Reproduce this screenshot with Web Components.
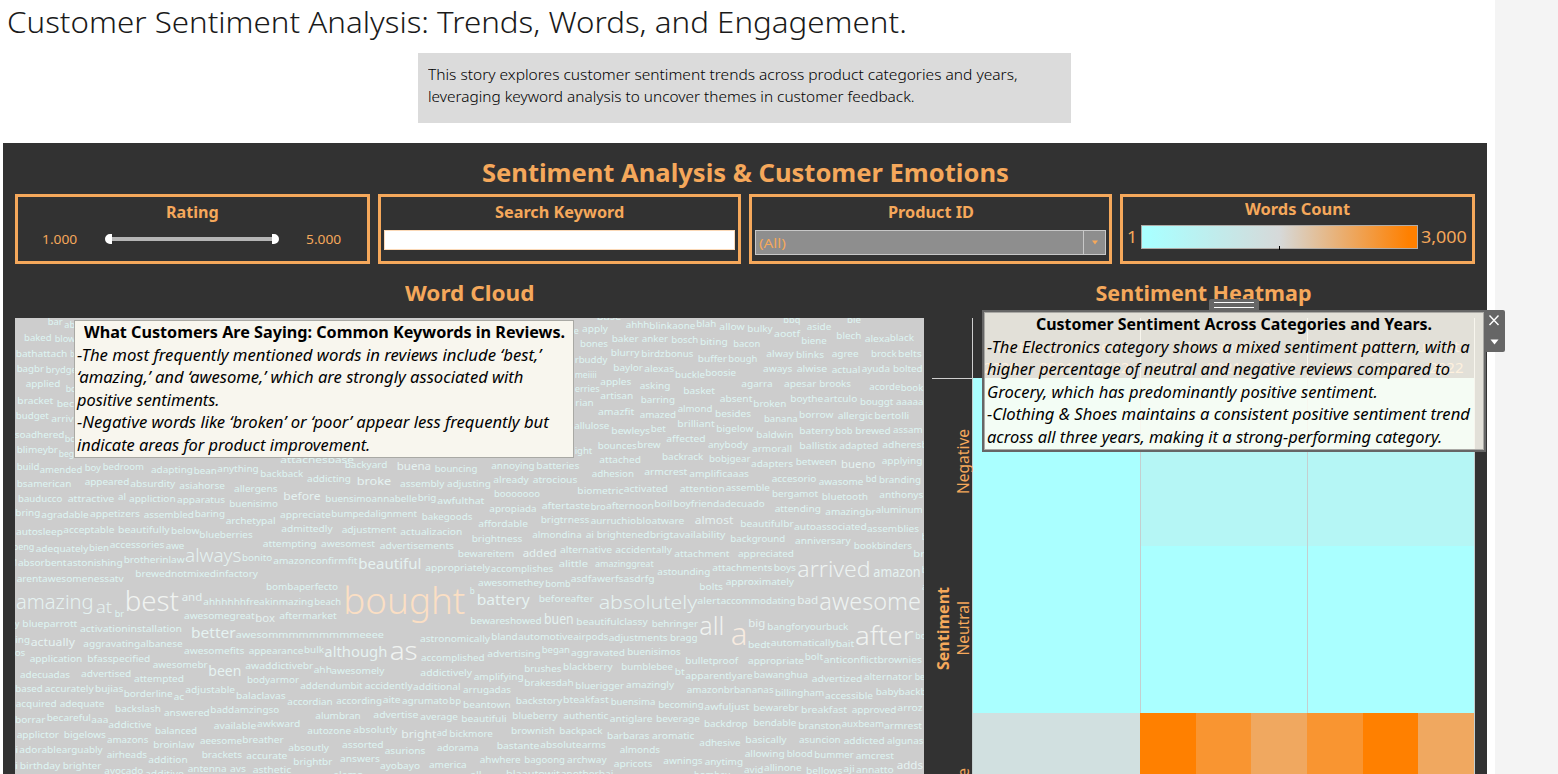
<!DOCTYPE html>
<html lang="en">
<head>
<meta charset="utf-8">
<title>Customer Sentiment Analysis</title>
<style>
html, body { margin: 0; height: 100%; overflow: hidden; background: #fff; }
body { font-family: "Noto Sans", "Open Sans", sans-serif; color: #333; }
</style>
</head>
<body>
<story-page></story-page>
<script>
const define = (name, html, setup) => customElements.define(name, class extends HTMLElement {
  connectedCallback() {
    if (this.shadowRoot) return;
    const t = document.createElement('template');
    t.innerHTML = html;
    this.attachShadow({ mode: 'open' }).append(t.content.cloneNode(true));
    if (setup) setup(this, this.shadowRoot);
  }
});

/* One line of text set to a fixed measure */
define('fit-text', `<style>
:host { display: block; white-space: nowrap; flex: none; }
span { display: inline-block; transform-origin: 0 50%; }
</style><span><slot></slot></span>`, (el, root) => {
  const w = +el.getAttribute('w');
  el.style.width = w + 'px';
  const s = root.querySelector('span');
  s.style.transform = `scaleX(${w / s.offsetWidth})`;
});

define('filter-card', `<style>
:host { display: block; box-sizing: border-box; height: 70px; border: 3px solid #f5a85b; color: #f5a85b; overflow: hidden; }
.t { display: flex; justify-content: center; font-weight: 700; font-size: 15.5px; line-height: 20px; padding-top: var(--top, 5px); }
</style><div class="t"><slot name="title"></slot></div><slot></slot>`);

define('range-slider', `<style>
:host { display: flex; align-items: center; font-size: 13px; height: 20px; padding: 7px 26px 0 24px; justify-content: space-between; }
svg { display: block; }
</style><fit-text w="35">1.000</fit-text>
<svg width="176" height="14"><path d="M5 7H170" stroke="#b5b5b5" stroke-width="4"/><path d="M8 2v10H6a5 5 0 0 1 0-10zM168 2v10h2a5 5 0 0 0 0-10z" fill="#fff"/></svg>
<fit-text w="35">5.000</fit-text>`);

define('search-box', `<style>:host { display: block; height: 18px; border: 1px solid #fbd9b8; background: #fff; margin: 8px 3px 0; }</style>`);

define('select-box', `<style>
:host { display: flex; height: 23px; border: 1px solid #c8c8c8; background: #8e8e8e; margin: 8px 3px 0; font-size: 13px; line-height: 25px; }
.v { flex: 1; padding-left: 3px; }
.a { width: 21px; border-left: 1px solid #c8c8c8; display: grid; place-items: center; }
</style><div class="v"><fit-text w="27">(All)</fit-text></div><div class="a"><svg width="8" height="5"><path d="M1 .5h6L4 4.5z" fill="#f5a85b"/></svg></div>`);

define('color-legend', `<style>
:host { display: flex; align-items: center; font-size: 16px; margin: 4px 4px 0; height: 27px; }
.bar { position: relative; width: 275px; height: 22px; border: 1px solid #b0aca8; margin: 0 3px 0 4px; background: linear-gradient(90deg, #aaffff, #aaffff 3%, #d6d9d9 50%, #ff8000 97%); }
.bar i { position: absolute; left: 137px; top: 20px; width: 1px; height: 4px; background: #000; }
</style><fit-text w="10">1</fit-text><div class="bar"><i></i></div><fit-text w="46">3,000</fit-text>`);

/* Word placement: "word left right middle [size]", in thirds of a pixel from each tile's origin */
const tiles = [
  { x: 10, y: 315, words: `bar 113 158 20|ab 163 195 29|baked 42 125 69|blow 134 196 72|bathattach 17 172 116|b 181 193 117|bagbr 20 102 161|brydge 107 200 163|applied 47 151 206|bc 167 196 221|bracket 22 130 257|bec 140 192 265|budget 17 116 303|arriv 124 190 311|soadhered 14 163 359|bc 164 194 371|blimeybr 20 144 404|beg 146 192 415|build 20 88 456|amended 89 217 465|boy 224 273 458|bedroom 278 402 456|adapting 423 549 464|bean 551 620 467|anything 622 746 462|backback 751 880 476|bsamerican 20 184 506|appeared 224 358 500|absurdity 361 496 507|asiahorse 508 645 513|allergens 672 803 521|bauducco 24 157 551|attractive 173 313 551|al 324 348 545|appliction 357 497 551|apparatus 501 645 554|buenisimo 658 804 566|before 820 932 543 11.5|bring 16 91 594|agradable 94 236 600|appetizers 240 390 597|assembled 401 552 599|baring 554 645 597|archetypal 647 797 617|appreciate 810 962 599|autosleep 18 159 651|acceptable 160 313 644|beautifully 324 479 645|below 483 568 648|blueberries 568 728 659|admittedly 814 968 641|attachesbase 811 1032 433` },
  { x: 300, y: 450, words: `backyard 134 262 44|buena 290 393 48 11.5|bouncing 404 532 56|annoying 574 704 47|batteries 709 838 47|addicting 21 153 87|broke 170 274 94 11.5|assembly 300 433 101|adjusting 441 573 101|already 580 686 90|atrocious 698 832 90|booooooo 582 720 132|buensimoannabelle 76 351 146|brig 353 409 144|awfulthat 412 553 152|apropiada 568 710 176|aftertaste 725 870 168|bro 872 917 170|bumpedalignment 94 351 192|bakegoods 365 517 201|affordable 535 684 221|brigtrness 722 868 210|adjustment 125 289 240|actualizacion 301 487 245|brightness 515 667 266|almondina 697 845 254|ai 857 882 254|attempting -112 50 282|awesomest 63 225 282|advertisements 239 462 287|bewareitem 473 643 311|added 668 770 309 11.5|alternative 780 936 299|amazonconfirmfit -80 172 332|beautiful 175 364 342 15|appropriately 376 570 354|accomplishes 572 760 356|alittle 776 864 342|awesomethey 534 732 399|bomb 736 812 402|b 509 524 423|battery 530 689 451 14|beforeafter 716 881 447|absolutely 896 1192 456 19|bought 130 496 454 36 #fbdfc4` },
  { x: 570, y: 315, words: `base 80 154 6|e 11 26 47|apply 36 114 42|ahhh 167 238 29|blink 238 306 31|aone 307 376 32|blah 379 439 27|allow 448 524 36|bulky 532 608 42|bbq 640 691 15|aootf 612 690 57|aside 710 784 36|biene 694 770 76|ble 831 873 15|blech 799 874 62|alexa 884 960 71|black 959 1032 69|bones 30 114 86|baker 125 206 71|anker 215 294 71|bosch 304 385 74|biting 390 473 81|bacon 490 571 86|rbuddy 14 112 135|blurry 122 208 113|birdz 214 284 116|bonus 285 370 117|buffer 383 471 131|bough 475 562 131|alway 589 671 117|blinks 678 762 119|agree 785 866 117|brock 903 980 117|belts 984 1055 117|meiiii 14 80 180|baylor 130 219 159|alexas 223 312 162|buckle 315 405 179|boosie 406 498 173|aways 579 667 162|alwise 680 772 162|actual 785 871 164|ayuda 875 960 162|bolted 969 1058 162|erries 14 89 221|apples 91 184 200|asking 209 301 213|basket 340 435 227|agarra 514 608 207|apesar 642 739 207|brooks 748 843 207|acorde 898 991 216|book 992 1060 219|rian 16 71 263|artisan 91 190 242|barring 212 315 255|almond 323 427 282|absent 449 547 251|broken 550 649 267|boythe 661 760 251|artculo 762 862 251|bouggt 870 970 261|aaaaa 978 1061 261|amazfit 84 193 290|amazed 209 318 300|besides 435 543 296|banana 582 683 311|borrow 687 790 300|allergic 803 908 302|bertolli 913 1018 302|allulose 13 118 332|bewleys 124 240 348|bet 242 287 342|brilliant 322 434 326|bigelow 439 550 341|baldwin 559 670 359|baterry 688 793 347|bob 796 848 347|brewed 856 962 347|assam 969 1058 345|ight 14 67 407|bounces 83 200 392|brew 202 272 390|affected 289 407 371|anybody 414 533 388|armorall 546 666 401|ballistix 688 801 392|adapted 808 925 393|adheres 937 1054 389|b 1055 1070 389|attached 88 213 434|backrack 276 400 426|bobjgear 417 542 432|adapters 543 669 446|between 677 800 440|bueno 813 916 447 11.5|applying 935 1057 438|adhesion 65 192 476|armcrest 223 352 471|amplificaaas 358 537 477` },
  { x: 610, y: 450, words: `accesorio 485 619 86|awasome 626 760 95|bd 767 800 86|branding 807 933 88|biometric -98 40 122|activated 41 174 116|attention 209 344 117|assemble 347 480 114|bergamot 486 624 132|bluetooth 635 774 140|anthonys 808 940 134|afternoon -12 131 167|boil 133 187 161|boyfriend 190 328 161|adecuado 328 464 161|attending 494 633 177|amazingbr 646 797 185|aluminum 797 938 179|aurruchio -58 78 212|bloatware 79 223 212|almost 254 370 210 11.5|beautifulbr 391 551 221|autoassociated 552 770 230|assemblies 771 927 236|b 935 950 260|brightened -40 118 254|brigtavailability 119 346 254|background 361 526 266|anniversary 555 722 273|bookbinders 731 906 287|br 910 945 311|accidentally 16 186 299|attachment 193 358 311|appreciated 384 552 311|amazinggreat -45 131 342|astounding 142 301 365|attachments 307 487 353|boys 491 558 353|arrived 562 782 359 22 #edf3f2|amazon 790 932 366 14|b 935 950 360|asdfawerfsasdrfg -118 134 387|bolts 268 339 411|approximately 347 552 396|a 936 950 410|alert 262 331 452|accommodating 332 557 452|bad 562 625 450 11.5|awesome 628 933 454 24 #edf3f2` },
  { x: 10, y: 540, words: `beng 8 73 21|adequately 77 235 25|bien 237 297 23|accessories 299 463 15|awe 467 523 16|1 12 23 68|absorbent 24 169 68|astonishing 171 338 68|brotherinlaw 341 524 59|always 525 694 46 18|bonito 696 787 53|arent 20 96 115|awesomenessatv 96 341 117|brewednotmixedinfactory 376 744 101|bombaperfecto 768 984 140|amazing 18 251 186 20|at 258 306 201 17|br 314 342 221|best 344 507 185 27 #f0f3f1|and 515 577 172 11.5|ahhhhhhfreakinmazing 580 910 184|beach 913 993 184|y 14 28 252|blueparrott 37 202 251|activationinstallation 210 516 267|awesomegreat 522 734 228|box 736 795 235 11.5|aftermarket 808 980 228|ing 16 60 298|actually 62 195 306 11.5|aggravatingalbanese 220 518 312|better 543 677 278 14.5|awesommmmmmmmmeeee 677 1122 284|awesomefits 522 703 331|appearance 716 880 333|bulk 882 942 330|os 14 46 339` },
  { x: 10, y: 650, words: `application 59 217 26|bfasspecified 232 421 26|awesomebr 428 593 45|been 595 694 64 14.5|awaddictivebr 706 910 48|ahh 911 966 60|adecuadas 30 180 74|advertised 213 364 71|attempted 372 522 87|bodyarmor 711 867 89|based 16 98 117|accurately 104 251 117|bujias 255 340 117|borderline 341 488 131|ac 491 522 141|adjustable 526 675 119|balaclavas 678 827 137|addendumbit 871 1058 108|acquired 17 140 161|adequate 149 283 162|backslash 315 453 177|answered 462 599 188|baddamzingso 601 808 180|accordian 832 968 154|borrar 15 106 210|becareful 110 243 204|aaa 244 295 209|addictive 295 425 224|balanced 435 561 242|available 611 739 227|awkward 741 871 221|alumbran 916 1052 197|applictor 20 147 255|bigelows 161 288 255|amazons 291 415 269|broinlaw 430 553 285|aeesome 570 696 271|breather 697 821 269|autozone 892 1023 243|i 16 25 300|adorable 28 155 300|arguably 155 278 300|airheads 290 411 315|addition 415 533 330|brackets 575 696 315|accurate 709 832 317|absoutly 835 957 293|i 15 24 348|birthday 29 151 347|brighter 158 274 347|avocado 283 400 362|additive 405 522 372|antenna 533 650 357|avs 660 708 357|asthetic 728 844 360|brightbr 850 967 335` },
  { x: 310, y: 610, words: `although 43 232 126 15|as 239 323 124 26 #f0f3f1|bewareshowed 481 695 32|buen 702 791 26 14|beautifulclassy 799 1013 36|astronomically 330 540 86|bland 544 623 79|automotive 624 789 79|airpods 790 895 81|adjustments 896 1073 82|accomplished 333 524 144|advertising 532 692 131|began 695 780 120|aggravated 783 945 127|awesomely 64 223 183|addictively 331 486 189|amplifying 491 641 199|brushes 643 754 176|blackberry 759 908 171|accidently 164 308 228|additional 309 452 230|arrugadas 459 603 240|brakesdah 643 791 218|bluerigger 796 942 226|according 79 216 272|aite 218 272 270|agrumato 276 415 273|bp 418 453 273|beantown 459 602 284|backstory 617 757 272|bteakfast 759 896 269|buensima 902 1036 276|advertise 190 325 315|average 331 444 321|beautifuli 454 590 326|blueberry 607 743 318|authentic 760 895 316|antiglare 899 1028 326|absolutly 130 262 360|bright 274 379 372 11.5|ad 380 412 368|bickmore 418 549 371|brownish 603 735 362|backpack 748 878 362|barbaras 891 1018 377|assorted 96 221 405|asurions 224 346 422|adorama 381 506 413|bastante 560 688 407|absolute 691 814 405|arms 815 888 405|answers 90 210 447|ayobayo 210 330 468|america 357 470 465|ahwhere 509 632 450|bagoong 643 765 450|archway 771 890 450|alamo 70 160 494|all 480 515 494|blaautowit 588 750 492|anotherbai 752 910 492` },
  { x: 610, y: 610, words: `behringer 125 264 42|all 268 343 48 25 #f0f3f1|a 362 412 72 31 #f7ebe0|big 415 466 38 11.5|bangforyourbuck 472 715 50|bragg 180 263 84|bedt 414 481 104|automatically 482 677 99|bait 677 733 102|after 735 911 77 26 #f0f3f1|bo 916 948 78|buenisimos 52 212 125|bulletproof 226 385 152|appropriate 414 582 152|bolt 584 639 141|anticonflictbrownies 641 936 149|bumblebee 34 189 171|bt 194 224 185|apparently 226 380 198|are 381 428 198|bawanghua 431 594 195|advertized 605 757 205|alternator 761 907 201|be 914 945 201|amazingly 48 192 225|amazonbrbananas 230 491 240|billingham 495 643 249|accessible 645 789 257|babybackb 797 950 246|becoming 145 281 284|awfuljust 283 418 290|bewarebr 430 566 293|breakfast 573 711 299|approved 725 859 299|arroz 862 938 294|beverage 138 270 326|backdrop 282 413 342|bendable 430 559 338|branston 565 694 347|auxbeam 695 822 342|armrest 822 936 347|aromatic 126 253 377|adhesive 268 392 399|basically 406 530 389|asuncion 567 692 389|addicted 701 824 393|algunas 831 940 392|almonds 29 150 419|awnings 160 278 453|anytimg 284 399 454|allowing 404 524 432|blood 530 608 432|bummer 613 731 435|amcrest 737 852 437|apricots 11 127 461|avid 402 460 480|allinone 462 575 474|bellows 588 697 482|aji 700 734 477|annatto 738 851 479|adds 860 939 465 11.5|bombay 252 360 494` }
];

define('word-cloud', `<style>
:host { display: block; overflow: hidden; background: #cdcdcd; }
svg { display: block; }
</style><svg width="909" height="456" viewBox="15 318 909 456"></svg>`, (el, root) => {
  const svg = root.querySelector('svg');
  for (const t of tiles) for (const entry of t.words.split('|')) {
    const [word, l, r, mid, size = 9.4, fill = size > 10 ? '#e6f3f2' : '#def5f3'] = entry.split(' ');
    const n = document.createElementNS('http://www.w3.org/2000/svg', 'text');
    n.textContent = word;
    const a = {
      x: t.x + l / 3, y: t.y + mid / 3 + size * .35, 'font-size': size, fill,
      'font-weight': size > 16 ? 300 : 400, textLength: (r - l) / 3, lengthAdjust: 'spacingAndGlyphs'
    };
    for (const k in a) n.setAttribute(k, a[k]);
    svg.append(n);
  }
});

define('heat-map', `<style>
:host { display: grid; grid-template: 60px 168px 167px 168px / 22px 18px 168px 167px 168px; color: #f5a85b; font-size: 15.5px; overflow: hidden; }
.axis, .row { display: grid; place-items: center; border-top: 1px solid #cfcfcf; }
.axis { grid-area: 2 / 1 / 5 / 2; font-weight: 700; font-size: 16px; }
.row { grid-column: 2; }
.axis span, .row span { writing-mode: vertical-rl; transform: rotate(180deg); line-height: 18px; white-space: nowrap; margin-bottom: 3px; }
.row { border-top-color: transparent; }
.row.first { border-top-color: #cfcfcf; }
.head { grid-row: 1; border-left: 1px solid #cfcfcf; display: flex; flex-direction: column; align-items: center; padding-top: 18px; line-height: 21px; font-size: 15px; }
.head:nth-of-type(3) { border-right: 1px solid #cfcfcf; }
.years { display: flex; align-self: stretch; justify-content: space-around; }
.cell { display: flex; border-left: 1px solid #c4cfcf; background: var(--c, #aaffff); }
.cell i { flex: 1; }
.hot { border-left: 0; }
.end { border-right: 1px solid #c4cfcf; }
</style>
<div class="head" style="grid-column:3">Clothing &amp; Shoes<div class="years"><span>2020</span><span>2021</span><span>2022</span></div></div>
<div class="head" style="grid-column:4">Electronics<div class="years"><span>2020</span><span>2021</span><span>2022</span></div></div>
<div class="head" style="grid-column:5">Grocery &amp; Gourmet<div class="years"><span>2020</span><span>2021</span><span>2022</span></div></div>
<div class="axis"><span>Sentiment</span></div>
<div class="row first" style="grid-row:2"><span>Negative</span></div>
<div class="cell" style="grid-area:2/3"></div><div class="cell" style="grid-area:2/4;--c:#b5f6f5"></div><div class="cell end" style="grid-area:2/5;--c:#b5f6f5"></div>
<div class="row" style="grid-row:3"><span>Neutral</span></div>
<div class="cell" style="grid-area:3/3"></div><div class="cell" style="grid-area:3/4"></div><div class="cell end" style="grid-area:3/5"></div>
<div class="row" style="grid-row:4"><span>Positive</span></div>
<div class="cell" style="grid-area:4/3;--c:#d1e0e0"></div>
<div class="cell hot" style="grid-area:4/4"><i style="background:#ff8000"></i><i style="background:#f99531"></i><i style="background:#f0a860"></i></div>
<div class="cell hot end" style="grid-area:4/5"><i style="background:#f99531"></i><i style="background:#ff8000"></i><i style="background:#f0a860"></i></div>`);

define('note-box', `<style>
:host { position: absolute; box-sizing: border-box; background: rgba(255,253,243,.86); border: 1px solid #a9a9a4; color: #000; font-size: 16px; line-height: 22.5px; font-style: italic; }
:host([selected]) { border: 2px solid #666; box-shadow: inset 0 0 0 1px #aaa9a5; }
.t { font-weight: 700; font-style: normal; display: flex; justify-content: center; }
.grip, .tools { display: none; }
:host([selected]) .grip { display: grid; position: absolute; left: 225px; top: -13px; width: 50px; height: 12px; background: #666; border-radius: 2px 2px 0 0; }
:host([selected]) .tools { display: block; position: absolute; left: 500px; top: -2px; width: 21px; height: 42px; background: #666; border-radius: 0 2px 2px 0; }
svg { display: block; }
</style><div class="t"><slot name="title"></slot></div><slot></slot>
<div class="grip"><svg width="50" height="12"><path d="M5 3.5h40M5 8.5h40" stroke="#fff"/></svg></div>
<div class="tools"><svg width="21" height="42"><path d="M5.500 5.500l9 9.500M14.500 5.500l-9 9.500" stroke="#fff" stroke-width="1.400"/><path d="M6.500 29.500h8l-4 5z" fill="#fff"/></svg></div>`);

define('story-page', `<style>
:host { display: flex; height: 774px; justify-content: space-between; position: relative; overflow: hidden; }
main { width: 1487px; }
.rail { width: 63px; background: #f4f4f4; }
h1 { margin: 0; font-weight: 300; font-size: 29px; line-height: 44px; height: 53px; padding-left: 7px; box-sizing: border-box; color: #1a1a1a; }
.caption { margin-left: 418px; width: 653px; height: 70px; box-sizing: border-box; background: #dbdbdb; padding: 10px 10px; font-size: 14.5px; line-height: 22px; color: #000; font-weight: 300; }
.board { margin: 20px 0 0 3px; height: 631px; background: #323232; padding: 0 12px; box-sizing: border-box; color: #f5a85b; }
.head { height: 51px; display: flex; justify-content: center; font-weight: 700; font-size: 25px; line-height: 59px; }
.filters { display: grid; grid-template-columns: 355px 363px 363px 355px; gap: 8px; }
.views { display: grid; grid-template-columns: 909px 543px; gap: 8px; }
h2 { margin: 0; height: 54px; font-size: 21.5px; line-height: 57px; display: flex; justify-content: center; }
word-cloud, heat-map { height: 456px; }
.n1 { left: 74px; top: 320px; width: 500px; height: 138px; padding: 0 2px; }
.n2 { left: 982px; top: 310px; width: 504px; height: 142px; padding: 1px 3px; }
</style>
<main>
<h1><fit-text w="900">Customer Sentiment Analysis: Trends, Words, and Engagement.</fit-text></h1>
<div class="caption"><fit-text w="589">This story explores customer sentiment trends across product categories and years,</fit-text><fit-text w="487">leveraging keyword analysis to uncover themes in customer feedback.</fit-text></div>
<section class="board">
<div class="head"><fit-text w="527">Sentiment Analysis &amp; Customer Emotions</fit-text></div>
<div class="filters">
<filter-card><fit-text slot="title" w="53">Rating</fit-text><range-slider></range-slider></filter-card>
<filter-card><fit-text slot="title" w="129">Search Keyword</fit-text><search-box></search-box></filter-card>
<filter-card><fit-text slot="title" w="86">Product ID</fit-text><select-box></select-box></filter-card>
<filter-card style="--top:2px"><fit-text slot="title" w="105">Words Count</fit-text><color-legend></color-legend></filter-card>
</div>
<div class="views">
<div><h2><fit-text w="129">Word Cloud</fit-text></h2><word-cloud></word-cloud></div>
<div><h2><fit-text w="216">Sentiment Heatmap</fit-text></h2><heat-map></heat-map></div>
</div>
</section>
</main>
<div class="rail"></div>
<note-box class="n1"><fit-text slot="title" w="481">What Customers Are Saying: Common Keywords in Reviews.</fit-text>
<fit-text w="464">-The most frequently mentioned words in reviews include ‘best,’</fit-text>
<fit-text w="447">‘amazing,’ and ‘awesome,’ which are strongly associated with</fit-text>
<fit-text w="143">positive sentiments.</fit-text>
<fit-text w="472">-Negative words like ‘broken’ or ‘poor’ appear less frequently but</fit-text>
<fit-text w="293">indicate areas for product improvement.</fit-text></note-box>
<note-box class="n2" selected><fit-text slot="title" w="396">Customer Sentiment Across Categories and Years.</fit-text>
<fit-text w="483">-The Electronics category shows a mixed sentiment pattern, with a</fit-text>
<fit-text w="463">higher percentage of neutral and negative reviews compared to</fit-text>
<fit-text w="391">Grocery, which has predominantly positive sentiment.</fit-text>
<fit-text w="483">-Clothing &amp; Shoes maintains a consistent positive sentiment trend</fit-text>
<fit-text w="455">across all three years, making it a strong-performing category.</fit-text></note-box>`);
</script>
</body>
</html>
